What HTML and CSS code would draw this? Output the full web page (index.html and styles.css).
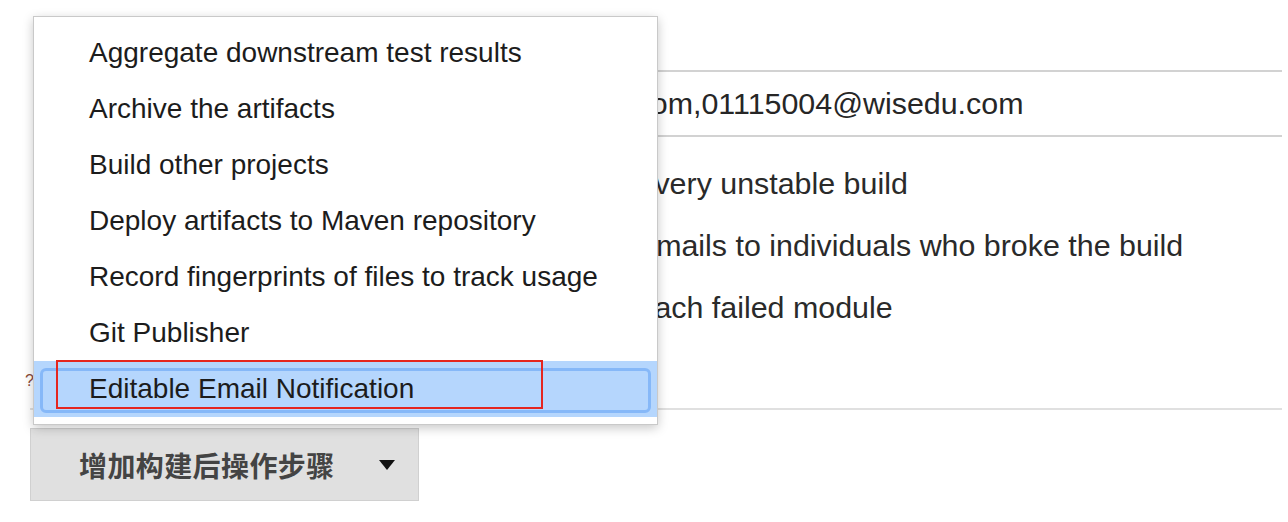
FILE: index.html
```html
<!DOCTYPE html>
<html lang="en">
<head>
<meta charset="utf-8">
<title>Post-build actions</title>
<link rel="stylesheet" href="styles.css">
</head>
<body>
<main class="page">
  <div class="field-row">
    <div class="text-input">01115003@wisedu.com,01115004@wisedu.com</div>
  </div>
  <div class="check-row"><span class="checkbox"></span><span class="check-text">Send e-mail for every unstable build</span></div>
  <div class="check-row"><span class="checkbox"></span><span class="check-text">Send separate e-mails to individuals who broke the build</span></div>
  <div class="check-row"><span class="checkbox"></span><span class="check-text">Send e-mail for each failed module</span></div>
  <div class="advanced-row"><span class="advanced-text">?</span></div>
  <div class="divider"></div>
  <button class="add-step" type="button"><span class="add-step-label">增加构建后操作步骤</span><span class="caret"></span></button>
</main>

<ul class="menu">
  <li class="menu-item">Aggregate downstream test results</li>
  <li class="menu-item">Archive the artifacts</li>
  <li class="menu-item">Build other projects</li>
  <li class="menu-item">Deploy artifacts to Maven repository</li>
  <li class="menu-item">Record fingerprints of files to track usage</li>
  <li class="menu-item">Git Publisher</li>
  <li class="menu-item is-active">Editable Email Notification<span class="annotation"></span></li>
</ul>
</body>
</html>
```

FILE: styles.css
```css
* { box-sizing: border-box; }

html, body {
  margin: 0;
  padding: 0;
  background: #ffffff;
}

body {
  width: 1288px;
  height: 522px;
  overflow: hidden;
  position: relative;
  font-family: "Liberation Sans", Arial, sans-serif;
  color: #2a2a2a;
}

.page {
  padding: 0 6px 0 30px;
}

/* e-mail recipients row */
.field-row {
  margin-top: 70px;
  height: 67px;
  padding-left: 336px;
}

.text-input {
  height: 67px;
  border-top: 2px solid #d2d2d2;
  border-bottom: 2px solid #d2d2d2;
  border-left: 1px solid #d2d2d2;
  padding-left: 4px;
  font-size: 30.4px;
  line-height: 63px;
  white-space: nowrap;
  overflow: hidden;
  color: #262626;
}

/* checkbox rows */
.check-row {
  display: flex;
  align-items: center;
  height: 62px;
  padding-left: 329px;
}
.field-row + .check-row { margin-top: 15px; }

.checkbox {
  width: 20px;
  height: 20px;
  border: 1px solid #888;
  border-radius: 3px;
  margin-left: 30px;
  margin-right: 14px;
  flex: none;
}

.check-text {
  font-size: 30.4px;
  white-space: nowrap;
  color: #2a2a2a;
}

.advanced-row {
  height: 70px;
  display: flex;
  align-items: flex-end;
  padding-bottom: 18px;
  margin-left: -5px;
}
.advanced-text {
  font-size: 16px;
  color: #8a4a3a;
}

.divider {
  height: 2px;
  background: #e0e0e0;
}

/* add post-build step button */
.add-step {
  display: flex;
  align-items: center;
  margin-top: 18px;
  width: 389px;
  height: 73px;
  padding: 0 0 0 48px;
  background: #e0e0e0;
  border: 1px solid #d0d0d0;
  border-radius: 0;
  font-size: 28px;
  font-weight: bold;
  color: #444444;
  cursor: pointer;
}
.add-step-label {
  font-family: "Noto Sans CJK SC", sans-serif;
  font-weight: bold;
  letter-spacing: 0.4px;
}
.caret {
  margin-left: 44px;
  width: 0;
  height: 0;
  border-left: 8px solid transparent;
  border-right: 8px solid transparent;
  border-top: 10px solid #111;
}

/* dropdown menu overlay */
.menu {
  position: absolute;
  left: 33px;
  top: 16px;
  width: 625px;
  height: 409px;
  margin: 0;
  padding: 8px 0 0 0;
  list-style: none;
  background: #ffffff;
  border: 1px solid #c9c9c9;
  box-shadow: 0 3px 10px rgba(0, 0, 0, 0.22);
}

.menu-item {
  position: relative;
  height: 56px;
  line-height: 56px;
  padding-left: 55px;
  font-size: 28px;
  color: #1c1c1c;
  white-space: nowrap;
}

.menu-item.is-active {
  background: #b5d6fd;
}
.menu-item.is-active::before {
  content: "";
  position: absolute;
  left: 6px;
  right: 6px;
  top: 7px;
  bottom: 4px;
  border: 3px solid #86b8f8;
  border-radius: 6px;
}

.annotation {
  position: absolute;
  left: 22px;
  top: -1px;
  width: 487px;
  height: 49px;
  border: 2px solid #e5261f;
}
```
